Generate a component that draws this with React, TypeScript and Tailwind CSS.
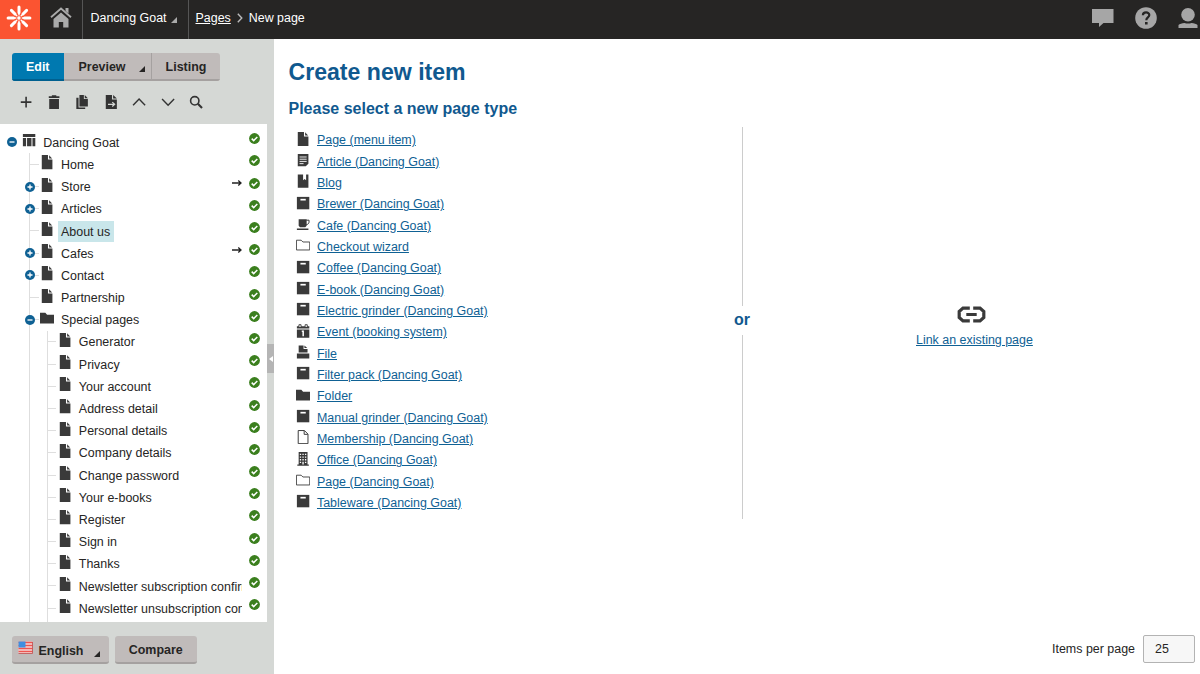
"use client";

import type { ReactNode } from "react";

type IconName =
  | "doc"
  | "docOutline"
  | "docText"
  | "layout"
  | "book"
  | "box"
  | "cup"
  | "folder"
  | "folderOutline"
  | "calendar"
  | "fileTray"
  | "office";

// 16x16 glyphs shared by the content tree and the page type list
const icons: Record<IconName, ReactNode> = {
  doc: <path d="M2 0h7v5h5v11H2zM10.3 0.4 13.7 4h-3.4z" />,
  docOutline: (
    <path
      d="M2.5 0.6h7l4 4v10.8h-11zM9.2 0.8v4.1h4.1"
      fill="none"
      stroke="currentColor"
      strokeWidth="1.1"
    />
  ),
  docText: (
    <>
      <path d="M2 1h12v11l-3 3H2z" />
      <path d="M4 4.5h8M4 7h8M4 9.5h8M4 12h4.5" stroke="#fff" strokeWidth="1" />
    </>
  ),
  layout: <path d="M1 1h14v3.600H1zM1 5.600h3.600V15H1zM5.700 5.600h5V15h-5zM11.800 5.600H15V15h-3.200z" />,
  book: <path d="M2 0.5h6V7l1.700-1.500L11.400 7V0.500H14V15.500H2z" />,
  box: (
    <>
      <path d="M1 1h14v14H1z" />
      <path d="M5 3.200h6v1.900H5z" fill="#fff" />
    </>
  ),
  cup: (
    <>
      <path d="M3 2.500h9V10l-1.500 1.500h-6L3 10zM1 13h13v1.600H1z" />
      <path
        d="M11.500 3.600h3.200v2.200c0 1.500-1.500 2.700-3.200 3"
        fill="none"
        stroke="currentColor"
        strokeWidth="1.100"
      />
    </>
  ),
  folder: <path d="M0 2h6l2 2.200h8V14H0z" />,
  folderOutline: (
    <path
      d="M0.500 2.500h5.300l2 2h7.700v9H0.500z"
      fill="none"
      stroke="currentColor"
      strokeWidth="1"
    />
  ),
  calendar: (
    <>
      <path d="M1 6.200h14V15.500H1zM1 2.600h14v2.600H1z" />
      <path d="M3.300 3.500V.800h2.400v2.700M10.300 3.500V.800h2.400v2.700" fill="#fff" stroke="#3a3a3a" strokeWidth="1" />
      <path d="M6.500 8.300h1.600v5.600" fill="none" stroke="#fff" strokeWidth="1.700" />
    </>
  ),
  fileTray: <path d="M3 0.500h5.500V4.500H13V8.500H3zM9.500 0.500 12.700 3.500H9.500zM1 9.700h14v1.500H1zM1 11h14v4.300H1z" />,
  office: (
    <>
      <path d="M3 0h10v14h1.500v1.500h-13V14H3z" />
      <path
        d="M4.300 2h1.500v1.500H4.300zM7.200 2h1.500v1.500H7.200zM10.100 2h1.500v1.500h-1.500zM4.300 5h1.500v1.500H4.300zM7.200 5h1.500v1.500H7.200zM10.100 5h1.500v1.500h-1.500zM4.300 8h1.500v1.500H4.300zM7.200 8h1.500v1.500H7.200zM10.100 8h1.500v1.500h-1.500zM4.300 11h1.500v1.500H4.300zM7.200 11h1.500v3H7.200zM10.100 11h1.500v1.500h-1.500z"
        fill="#fff"
      />
    </>
  ),
};

function Glyph({ name }: { name: IconName }) {
  return (
    <svg viewBox="0 0 16 16" className="h-[14.2px] w-[14.2px] shrink-0 text-[#3a3a3a]" fill="currentColor">
      {icons[name]}
    </svg>
  );
}

interface TreeItem {
  label: string;
  level: 0 | 1 | 2;
  icon?: IconName;
  toggle?: "plus" | "minus";
  selected?: boolean;
  redirect?: boolean;
}

const treeItems: TreeItem[] = [
  { label: "Dancing Goat", level: 0, icon: "layout", toggle: "minus" },
  { label: "Home", level: 1 },
  { label: "Store", level: 1, toggle: "plus", redirect: true },
  { label: "Articles", level: 1, toggle: "plus" },
  { label: "About us", level: 1, selected: true },
  { label: "Cafes", level: 1, toggle: "plus", redirect: true },
  { label: "Contact", level: 1, toggle: "plus" },
  { label: "Partnership", level: 1 },
  { label: "Special pages", level: 1, icon: "folder", toggle: "minus" },
  { label: "Generator", level: 2 },
  { label: "Privacy", level: 2 },
  { label: "Your account", level: 2 },
  { label: "Address detail", level: 2 },
  { label: "Personal details", level: 2 },
  { label: "Company details", level: 2 },
  { label: "Change password", level: 2 },
  { label: "Your e-books", level: 2 },
  { label: "Register", level: 2 },
  { label: "Sign in", level: 2 },
  { label: "Thanks", level: 2 },
  { label: "Newsletter subscription confirmation", level: 2 },
  { label: "Newsletter unsubscription confirmation", level: 2 },
];

const pageTypes: { label: string; icon: IconName }[] = [
  { label: "Page (menu item)", icon: "doc" },
  { label: "Article (Dancing Goat)", icon: "docText" },
  { label: "Blog", icon: "book" },
  { label: "Brewer (Dancing Goat)", icon: "box" },
  { label: "Cafe (Dancing Goat)", icon: "cup" },
  { label: "Checkout wizard", icon: "folderOutline" },
  { label: "Coffee (Dancing Goat)", icon: "box" },
  { label: "E-book (Dancing Goat)", icon: "box" },
  { label: "Electric grinder (Dancing Goat)", icon: "box" },
  { label: "Event (booking system)", icon: "calendar" },
  { label: "File", icon: "fileTray" },
  { label: "Filter pack (Dancing Goat)", icon: "box" },
  { label: "Folder", icon: "folder" },
  { label: "Manual grinder (Dancing Goat)", icon: "box" },
  { label: "Membership (Dancing Goat)", icon: "docOutline" },
  { label: "Office (Dancing Goat)", icon: "office" },
  { label: "Page (Dancing Goat)", icon: "folderOutline" },
  { label: "Tableware (Dancing Goat)", icon: "box" },
];

// Small corner triangle used by every dropdown button
function Corner({ className }: { className: string }) {
  return (
    <svg viewBox="0 0 6 6" className={`h-1.5 w-1.5 ${className}`} fill="currentColor">
      <path d="M6 0v6H0z" />
    </svg>
  );
}

function Toggle({ kind }: { kind: "plus" | "minus" }) {
  return (
    <svg viewBox="0 0 10 10" className="relative h-2.5 w-2.5">
      <circle cx="5" cy="5" r="5" fill="#0f6194" />
      <path
        d={kind === "plus" ? "M2.500 5h5M5 2.500v5" : "M2.500 5h5"}
        stroke="#fff"
        strokeWidth="1.300"
      />
    </svg>
  );
}

function TreeRow({ item }: { item: TreeItem }) {
  return (
    <li className="flex h-[22.19px] items-center pl-[3.1px]">
      {/* Guide columns, the last one holds the expander */}
      {Array.from({ length: item.level + 1 }, (_, column) => (
        <span
          key={column}
          className="relative flex h-full w-[17.8px] shrink-0 items-center justify-center"
        >
          {column > 0 && <span className="absolute inset-y-0 left-[8.5px] w-px bg-[#dedede]" />}
          {column > 0 && column === item.level && (
            <span className="absolute top-[10.5px] right-0 left-[8.5px] h-px bg-[#dedede]" />
          )}
          {column === item.level && item.toggle && <Toggle kind={item.toggle} />}
        </span>
      ))}
      <span className="ml-[1.2px] flex shrink-0 pb-1">
        <Glyph name={item.icon ?? "doc"} />
      </span>
      <span className="ml-[3.8px] flex min-w-0 flex-1">
        <span
          className={`overflow-hidden pt-px pr-[3.6px] pl-[3.2px] leading-[20px] whitespace-nowrap ${
            item.selected ? "bg-[#c9e6ea]" : ""
          }`}
        >
          {item.label}
        </span>
      </span>
      {item.redirect && (
        <svg viewBox="0 0 10 8" className="mb-[7px] h-2 w-2.5" fill="none" stroke="#222" strokeWidth="1.3">
          <path d="M0 4h9M6.300 1.500 9 4 6.300 6.500" />
        </svg>
      )}
      <svg viewBox="0 0 11 11" className="mr-[6.8px] mb-[7px] ml-[7px] h-[11px] w-[11px] shrink-0">
        <circle cx="5.500" cy="5.500" r="5.400" fill="#3b7f1e" />
        <path d="m2.700 5.600 2 2 3.600-3.700" fill="none" stroke="#fff" strokeWidth="1.500" />
      </svg>
    </li>
  );
}

function TopBar() {
  return (
    <header className="flex h-[39px] shrink-0 items-stretch bg-[#262524] text-white">
      <div className="flex w-10 items-center bg-[#fb5431] pb-1 pl-[5.5px]">
        <svg viewBox="-13 -13 26 26" className="h-[26px] w-[26px]" stroke="#fff" strokeLinecap="round">
          <path
            d="M0-5.500V-10.900M0 5.500V10.900M-5.500 0H-10.900M5.500 0H10.900M-4-4l-3.600-3.600M4 4l3.600 3.600M-4 4l-3.600 3.600M4-4l3.600-3.600"
            strokeWidth="3"
          />
          <path d="M0-5V5M-5 0H5M-3.500-3.500l7 7M-3.500 3.500l7-7" strokeWidth="1.400" />
          <circle r="2.300" fill="#fff" stroke="#fb5431" strokeWidth="1" />
        </svg>
      </div>
      <div className="flex w-[43px] items-center justify-center border-r border-[#555] pb-[5px]">
        <svg viewBox="0 0 22 21" className="h-[21px] w-[22px]" fill="#aaa">
          <path d="M3.500 12 11 5.500 18.500 12v8.500h-5.300V15H8.800v5.500H3.500z" />
          <path d="m1 10.300 10-8.800 10 8.800" fill="none" stroke="#aaa" strokeWidth="1.800" />
          <path d="M15.500 1h3v5.500l-3-2.600z" />
        </svg>
      </div>
      <div className="flex w-[106px] items-center border-r border-[#555] pb-[3px] pl-[7.5px]">
        <span>Dancing Goat</span>
        <Corner className="mt-1 ml-1 text-[#aaa]" />
      </div>
      <nav className="flex items-center pb-[3px] pl-[6.5px]">
        <a className="underline underline-offset-[1px]">Pages</a>
        <svg viewBox="0 0 6 10" className="mx-[6px] h-2.5 w-1.5" fill="none" stroke="#bbb" strokeWidth="1.400">
          <path d="m0.800 0.800 4 4.200-4 4.200" />
        </svg>
        <span>New page</span>
      </nav>
      <div className="mr-[2px] ml-auto flex items-center gap-[21px] pb-[4px] text-[#a6a6a6]">
        <svg viewBox="0 0 22 18" className="h-[18px] w-[22px]" fill="currentColor">
          <path d="M0 0h21.500v14H11.500L7 18v-4H0z" />
        </svg>
        <svg viewBox="0 0 22 22" className="h-[22px] w-[22px]">
          <circle cx="11" cy="11" r="10.800" fill="currentColor" />
          <path
            d="M7.900 8.300c0-3.800 6.400-3.800 6.400-.2 0 2.300-3 2.400-3 5.100"
            fill="none"
            stroke="#262524"
            strokeWidth="2.200"
          />
          <path d="M10 15h2.600v2.500H10z" fill="#262524" />
        </svg>
        <svg viewBox="0 0 20 20" className="mt-[1px] h-[20px] w-[20px]" fill="currentColor">
          <ellipse cx="10" cy="6.700" rx="6.800" ry="6.700" />
          <path d="M0.500 20v-3c1-1.200 3.500-1.700 6-2.100 2 .9 5 .9 7 0 2.500.4 5 .9 6 2.100v3z" />
        </svg>
      </div>
    </header>
  );
}

function Toolbar() {
  const button = "flex w-[28.4px] justify-center";
  const svg = "h-[14.2px] w-[14.2px]";
  return (
    <div className="mt-[14px] flex pl-[11.5px] text-[#333]">
      <button className={button} aria-label="New">
        <svg viewBox="0 0 16 16" className={svg} fill="none" stroke="currentColor" strokeWidth="1.800">
          <path d="M2 8h12M8 2v12" />
        </svg>
      </button>
      <button className={button} aria-label="Delete">
        <svg viewBox="0 0 16 16" className={svg} fill="currentColor">
          <path d="M2 1.500h3.500V.3h5v1.200H14v2H2zM2.500 4.600h11V15.800h-11z" />
        </svg>
      </button>
      <button className={button} aria-label="Copy">
        <svg viewBox="0 0 16 16" className={svg} fill="currentColor">
          <path d="M5 0h5v4.500h4.500V13H5zM11 0l3.500 3.600H11zM1.500 3H4v11h7.500v1.800h-10z" />
        </svg>
      </button>
      <button className={button} aria-label="Move">
        <svg viewBox="0 0 16 16" className={svg} fill="currentColor">
          <path d="M2 0h7v5h5.500v11H2zM10.300 0l4.200 4h-4.200z" />
          <path d="M4.500 10.500h7M9.300 8l2.700 2.500L9.300 13" fill="none" stroke="#d5d8d5" strokeWidth="1.400" />
        </svg>
      </button>
      <button className={button} aria-label="Up">
        <svg viewBox="0 0 16 16" className={svg} fill="none" stroke="currentColor" strokeWidth="1.600">
          <path d="m1.200 11.500 6.800-7 6.800 7" />
        </svg>
      </button>
      <button className={button} aria-label="Down">
        <svg viewBox="0 0 16 16" className={svg} fill="none" stroke="currentColor" strokeWidth="1.600">
          <path d="m1.200 4.500 6.800 7 6.800-7" />
        </svg>
      </button>
      <button className={button} aria-label="Search">
        <svg viewBox="0 0 16 16" className={svg} fill="none" stroke="currentColor" strokeWidth="1.800">
          <circle cx="6.500" cy="6.500" r="4.700" />
          <path d="m10 10 4.700 4.700" strokeWidth="2.400" />
        </svg>
      </button>
    </div>
  );
}

function Sidebar() {
  return (
    <aside className="flex w-[274px] shrink-0 flex-col bg-[#d5d8d5]">
      {/* View mode switch */}
      <div className="mt-3.5 ml-[11.5px] flex h-7 w-[208.5px] overflow-hidden rounded-[3px] font-bold text-[#262524]">
        <button className="w-[52.5px] border-b-2 border-[#00608f] bg-[#0079b0] pt-px text-white">Edit</button>
        <button className="flex w-[87px] items-center border-b-2 border-[#a5a1a0] bg-[#c0bbba] pt-px pl-[14.5px]">
          <span>Preview</span>
          <Corner className="mt-1 ml-[13px]" />
        </button>
        <button className="flex flex-1 border-b-2 border-[#a5a1a0] bg-[#c0bbba]">
          <span className="h-full w-px bg-[#a5a1a0]" />
          <span className="flex-1 self-center pt-px">Listing</span>
        </button>
      </div>
      <Toolbar />

      {/* Content tree and the collapse handle */}
      <div className="mt-[15px] flex h-[498px]">
        <ul className="w-[267px] overflow-hidden bg-white pt-[7px] text-[#262524]">
          {treeItems.map((item) => (
            <TreeRow key={item.label} item={item} />
          ))}
          <li className="flex h-[22.19px] pl-[29.4px]">
            <span className="mr-[16.8px] w-px bg-[#dedede]" />
            <span className="w-px bg-[#dedede]" />
          </li>
        </ul>
        <div className="flex flex-1 pt-[220px]">
          <div className="flex h-[29px] w-full items-center justify-center bg-[#b5b5b5]">
            <svg viewBox="0 0 4 6" className="h-1.5 w-1" fill="#fff">
              <path d="M4 0v6L0 3z" />
            </svg>
          </div>
        </div>
      </div>

      <div className="mt-3.5 ml-[11.5px] flex gap-[6.5px] font-bold text-[#262524]">
        <button className="flex h-7 w-[97px] items-center rounded-[3px] border-b-2 border-[#a5a1a0] bg-[#c0bbba] pt-px pl-1.5">
          <svg viewBox="0 0 15 13" className="mb-1 h-[13px] w-[15px]">
            <path d="M.5.500h14v12H.5z" fill="#f4d8d8" />
            <path d="M.5 1.500h14M.5 4.500h14M.5 7.500h14M.5 10.500h14" stroke="#ee5550" strokeWidth="1.500" />
            <path d="M.5.500h7v6h-7z" fill="#3f8fe0" />
            <path d="M.5 12.500h14V1" fill="none" stroke="#bd4d4d" strokeWidth=".8" />
          </svg>
          <span className="mt-[3px] ml-1.5">English</span>
          <Corner className="mt-2 ml-[11px]" />
        </button>
        <button className="h-7 w-[81.5px] rounded-[3px] border-b-2 border-[#a5a1a0] bg-[#c0bbba] pt-px">Compare</button>
      </div>
    </aside>
  );
}

export default function App() {
  return (
    <div className="flex h-[674px] w-[1200px] flex-col overflow-hidden bg-white font-['Liberation_Sans',Arial,sans-serif] text-[12.44px] leading-[18px]">
      <TopBar />
      <div className="flex flex-1">
        <Sidebar />
        <main className="flex flex-1 flex-col pl-[14.5px] text-[#10598f]">
          <h1 className="mt-[19px] text-[23.1px] leading-7 font-bold">Create new item</h1>
          <h2 className="mt-[13px] text-[16px] leading-5 font-bold">Please select a new page type</h2>

          <div className="mt-[8px] flex h-[392px]">
            {/* Page types */}
            <ul className="w-[438px] pt-[2.8px] pl-[7px] text-[#0f6194]">
              {pageTypes.map((type) => (
                <li key={type.label} className="flex h-[21.33px] items-center">
                  <span className="mr-[7.3px] pb-[3.5px]">
                    <Glyph name={type.icon} />
                  </span>
                  <a className="underline underline-offset-[1px]">{type.label}</a>
                </li>
              ))}
            </ul>

            <div className="flex w-[31px] flex-col items-center">
              <span className="ml-px h-[179px] w-[1.5px] bg-[#ccc]" />
              <span className="flex h-[29px] items-center pb-0.5 text-[16px] font-bold">or</span>
              <span className="ml-px w-[1.5px] flex-1 bg-[#ccc]" />
            </div>

            {/* Link to an existing page */}
            <div className="ml-[158.5px] flex flex-col items-center pt-[179px] text-[#0f6194]">
              <svg
                viewBox="0 0 29 17"
                className="mr-[5px] h-[17px] w-[29px]"
                fill="none"
                stroke="#3a3a3a"
                strokeWidth="3.2"
              >
                <path d="M12.800 2.100H6L2.200 5.500v6L6 14.900h6.800M16.200 2.100H23l3.800 3.400v6L23 14.900h-6.800M9.300 8.500h10.400" />
              </svg>
              <a className="mt-2 underline underline-offset-[1px]">Link an existing page</a>
            </div>
          </div>

          {/* Paging */}
          <div className="mt-auto mr-[5px] mb-[11px] flex items-center justify-end text-[#262524]">
            <span>Items per page</span>
            <span className="ml-2 flex h-7 w-[52px] items-center rounded-[2px] border border-[#b3b3b3] bg-[#f7f7f7] pl-[11px]">
              25
            </span>
          </div>
        </main>
      </div>
    </div>
  );
}
